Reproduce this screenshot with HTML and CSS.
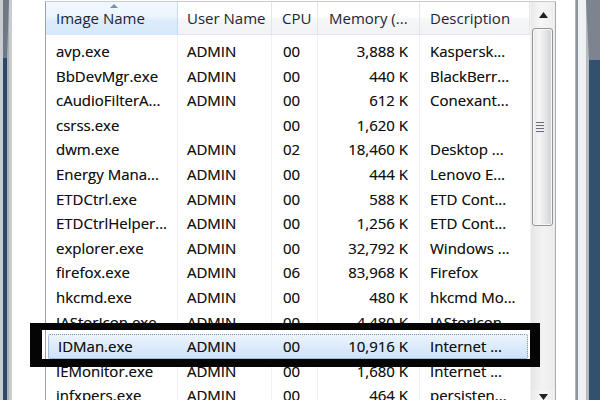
FILE: index.html
```html
<!DOCTYPE html>
<html>
<head>
<meta charset="utf-8">
<link rel="stylesheet" href="styles.css">
</head>
<body>
<div class="screen">
  <div class="frame-left"><div class="fl-in"></div></div>
  <div class="gutter-left"></div>
  <div class="listview">
    <div class="table">
      <div class="header">
        <div class="hcell sorted"><span class="sort-arrow"></span>Image Name</div>
        <div class="hcell">User Name</div>
        <div class="hcell">CPU</div>
        <div class="hcell">Memory (...</div>
        <div class="hcell">Description</div>
      </div>
      <div class="rows">
        <div class="row"><span class="c">avp.exe</span><span class="c">ADMIN</span><span class="c">00</span><span class="c num">3,888 K</span><span class="c">Kaspersk...</span></div>
        <div class="row"><span class="c">BbDevMgr.exe</span><span class="c">ADMIN</span><span class="c">00</span><span class="c num">440 K</span><span class="c">BlackBerr...</span></div>
        <div class="row"><span class="c">cAudioFilterA...</span><span class="c">ADMIN</span><span class="c">00</span><span class="c num">612 K</span><span class="c">Conexant...</span></div>
        <div class="row"><span class="c">csrss.exe</span><span class="c"></span><span class="c">00</span><span class="c num">1,620 K</span><span class="c"></span></div>
        <div class="row"><span class="c">dwm.exe</span><span class="c">ADMIN</span><span class="c">02</span><span class="c num">18,460 K</span><span class="c">Desktop ...</span></div>
        <div class="row"><span class="c">Energy Mana...</span><span class="c">ADMIN</span><span class="c">00</span><span class="c num">444 K</span><span class="c">Lenovo E...</span></div>
        <div class="row"><span class="c">ETDCtrl.exe</span><span class="c">ADMIN</span><span class="c">00</span><span class="c num">588 K</span><span class="c">ETD Cont...</span></div>
        <div class="row"><span class="c">ETDCtrlHelper...</span><span class="c">ADMIN</span><span class="c">00</span><span class="c num">1,256 K</span><span class="c">ETD Cont...</span></div>
        <div class="row"><span class="c">explorer.exe</span><span class="c">ADMIN</span><span class="c">00</span><span class="c num">32,792 K</span><span class="c">Windows ...</span></div>
        <div class="row"><span class="c">firefox.exe</span><span class="c">ADMIN</span><span class="c">06</span><span class="c num">83,968 K</span><span class="c">Firefox</span></div>
        <div class="row"><span class="c">hkcmd.exe</span><span class="c">ADMIN</span><span class="c">00</span><span class="c num">480 K</span><span class="c">hkcmd Mo...</span></div>
        <div class="row"><span class="c">IAStorIcon.exe</span><span class="c">ADMIN</span><span class="c">00</span><span class="c num">4,480 K</span><span class="c">IAStorIcon</span></div>
        <div class="row selected"><span class="c">IDMan.exe</span><span class="c">ADMIN</span><span class="c">00</span><span class="c num">10,916 K</span><span class="c">Internet ...</span></div>
        <div class="row"><span class="c">IEMonitor.exe</span><span class="c">ADMIN</span><span class="c">00</span><span class="c num">1,680 K</span><span class="c">Internet ...</span></div>
        <div class="row"><span class="c">infxpers.exe</span><span class="c">ADMIN</span><span class="c">00</span><span class="c num">464 K</span><span class="c">persisten...</span></div>
      </div>
    </div>
    <div class="scrollbar">
      <div class="sb-btn"><svg width="9" height="6" viewBox="0 0 9 6"><path d="M0 6 L4.5 0 L9 6 Z" fill="#222"/></svg></div>
      <div class="sb-thumb"><div class="grip"><i></i><i></i><i></i><i></i></div></div>
      <div class="sb-track"></div>
      <div class="sb-btn down"><svg width="9" height="6" viewBox="0 0 9 6"><path d="M0 0 L4.5 6 L9 0 Z" fill="#222"/></svg></div>
    </div>
  </div>
  <div class="gutter-right"></div>
  <div class="frame-right"><div class="fr-in"></div></div>
</div>
<div class="highlight-box"></div>
</body>
</html>
```

FILE: styles.css
```css
* { box-sizing: border-box; }
html, body { margin: 0; padding: 0; background: #fff; }
.screen {
  width: 600px;
  height: 400px;
  display: flex;
  font-family: "Open Sans", "Noto Sans", sans-serif;
  font-size: 15px;
  color: #111;
}
.frame-left {
  flex: 0 0 12px;
  background: #c9cdd2;
  padding-left: 3px;
  padding-right: 3px;
  display: flex;
}
.fl-in {
  flex: 1;
  background: #2e4866;
  border-top: 58px solid #6f7985;
  border-right: 2px solid #aab0b6;
}
.frame-right {
  flex: 0 0 24px;
  background: #eef0f2;
  padding-left: 8px;
  display: flex;
  border-left: 2px solid #8d949b;
}
.fr-in {
  flex: 1;
  background: #34506f;
  border-top: 60px solid #7b848f;
  border-left: 3px solid #b4bac0;
}
.gutter-left { flex: 0 0 33px; background: #fff; }
.listview {
  flex: 0 0 511px;
  height: 399px;
  margin-top: 1px;
  overflow: hidden;
  border-left: 1px solid #9ea3a8;
  border-top: 1px solid #c8cbce;
  display: flex;
}
.table { flex: 0 0 484px;
  background:
    linear-gradient(90deg, transparent 131px, #eef0f2 131px 132px, transparent 132px 225px, #eef0f2 225px 226px, transparent 226px 271px, #eef0f2 271px 272px, transparent 272px 373px, #eef0f2 373px 374px, transparent 374px);
}
.header {
  display: grid;
  grid-template-columns: 132px 94px 46px 102px 110px;
  height: 33px;
  background: linear-gradient(180deg, #ffffff 0%, #ffffff 45%, #f4f6f8 55%, #f1f3f5 100%);
  border-bottom: 1px solid #e2e5e9;
}
.hcell {
  position: relative;
  padding-left: 10px;
  line-height: 33px;
  color: #1b2636;
  border-right: 1px solid #e3e6ea;
  white-space: nowrap;
}
.hcell:nth-child(4) { padding-left: 11px; }
.hcell:nth-child(2) { padding-left: 9px; }
.hcell.sorted {
  background: linear-gradient(180deg, #f2f8fe 0%, #eaf4fd 45%, #dcecfc 55%, #d6e8fb 100%);
  border-right: 1px solid #c6dcf2;
}
.sort-arrow {
  position: absolute;
  left: 64px;
  top: 2px;
  border-left: 4px solid transparent;
  border-right: 4px solid transparent;
  border-bottom: 4px solid #7a8fa8;
  width: 0; height: 0;
}
.rows { padding-top: 4px; }
.row {
  display: grid;
  grid-template-columns: 132px 94px 46px 102px 110px;
  height: 24.6px;
  line-height: 24px;
  white-space: nowrap;
  text-shadow: 0 0 0.5px rgba(0,0,0,0.5);
}
.c { padding-left: 10px; overflow: hidden; }
.c:nth-child(2) { padding-left: 9px; }
.c:nth-child(3) { padding-left: 11px; }
.c.num { text-align: right; padding-left: 0; padding-right: 12px; }
.row.selected {
  margin-left: 2px;
  margin-right: 2px;
  grid-template-columns: 130px 94px 46px 102px 108px;
  background: linear-gradient(180deg, #eef5fd 0%, #dcebfc 50%, #cde2f9 100%);
  outline: 1px dotted #6f8fb8;
  outline-offset: -1px;
  border-radius: 2px;
}
.scrollbar {
  flex: 0 0 26px;
  display: flex;
  flex-direction: column;
  background: linear-gradient(90deg, #e9e9e9, #f6f6f6 40%, #eeeeee);
  border-right: 1px solid #a9acaf;
  border-left: 1px solid #f2f2f2;
}
.sb-btn {
  flex: 0 0 26px;
  display: flex;
  justify-content: center;
  align-items: flex-start;
  padding-top: 10px;
}
.sb-thumb {
  flex: 0 0 198px;
  margin: 0 2px 0 1px;
  border: 1px solid #929699;
  border-radius: 3px;
  background: linear-gradient(90deg, #e4e5e7 0%, #f7f7f8 30%, #e8e9ea 60%, #cfd1d4 100%);
  box-shadow: inset 0 0 0 1px #f8f8f8;
  display: flex;
  align-items: center;
  justify-content: center;
}
.grip { display: flex; flex-direction: column; gap: 1px; margin-right: 5px; }
.grip i { display: block; width: 8px; height: 2px; background: #6b7077; border-bottom: 1px solid #e9ecef; }
.sb-track { flex: 0 0 164px; background: linear-gradient(90deg, #e6e6e6, #f3f3f3 50%, #ebebeb); }
.sb-btn.down { padding-top: 4px; }
.gutter-right { flex: 0 0 20px; background: #fff; border-right: 1px solid #b4b7ba; }
.highlight-box {
  position: absolute;
  left: 30px;
  top: 323px;
  width: 510px;
  height: 44px;
  border-style: solid;
  border-color: #050505;
  border-width: 7px 10px 8px 12px;
}
```
